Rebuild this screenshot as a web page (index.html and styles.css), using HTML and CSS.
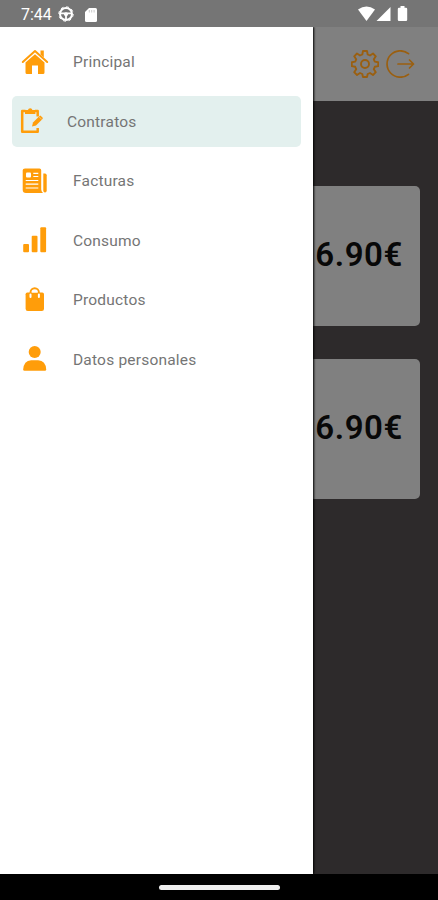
FILE: index.html
```html
<!DOCTYPE html>
<html lang="es">
<head>
  <meta charset="UTF-8" />
  <meta name="viewport" content="width=device-width, initial-scale=1.0" />
  <title>Contratos</title>
  <link rel="stylesheet" href="styles.css">
</head>
<body>
  <div class="status-bar">
    <span class="time">7:44</span>
    <svg class="status-wheel" width="16" height="16" viewBox="0 0 16 16">
      <circle cx="8" cy="8" r="6" fill="none" stroke="#fff" stroke-width="2"/>
      <circle cx="8" cy="8" r="7.2" fill="none" stroke="#fff" stroke-width="1" stroke-dasharray="2.8 2.85"/>
      <path d="M2 7.3h12M8 8v6" stroke="#fff" stroke-width="1.8"/>
      <circle cx="8" cy="8.3" r="2" fill="#fff"/>
    </svg>
    <svg class="status-card" width="12" height="14" viewBox="0 0 12 14">
      <path d="M4 0h6.5Q12 0 12 1.5v11Q12 14 10.5 14h-9Q0 14 0 12.500V4z" fill="#fff"/>
      <path d="M4.300 2v2.500M6.700 2v2.500M9.100 2v2.500" stroke="#bbb" stroke-width=".8"/>
    </svg>
    <svg class="status-signal" width="50" height="16" viewBox="0 0 50 16">
      <path d="M0 3.500Q8.500-2.500 17 3.500L8.500 15z" fill="#fff"/>
      <path d="M32.500 1v14H18.500z" fill="#fff"/>
      <path d="M42.500 0h4v1.700h1.500q1.200 0 1.200 1.200v10.900q0 1.200-1.200 1.200h-7q-1.200 0-1.200-1.200V2.900q0-1.200 1.200-1.200h1.500z" fill="#fff"/>
    </svg>
  </div>

  <div class="screen">
    <header>
      <svg width="28" height="28" viewBox="0 0 28 28" fill="none" stroke="#9a5f10" stroke-width="1.9" stroke-linejoin="round">
        <path d="M12 1h4l.7 3.500 2.300 1 3-2 2.800 2.800-2 3 1 2.300 3.400.7v3.800l-3.400.7-1 2.400 2 3-2.800 2.800-3-2-2.300 1L16 27h-4l-.7-3-2.300-1-3 2-2.800-2.800 2-3-1-2.400L.8 16.100v-3.800l3.400-.7 1-2.300-2-3L6 3.500l3 2 2.300-1z"/>
        <circle cx="14" cy="14" r="4"/>
      </svg>
      <svg width="29" height="28" viewBox="0 0 29 28" fill="none" stroke="#9a5f10" stroke-width="1.700" stroke-linecap="round" stroke-linejoin="round">
        <path d="M22.500 3.700A13.200 13.200 0 1 0 22.500 24.300"/>
        <path d="M12 14h15.500M23.500 10l4 4-4 4"/>
      </svg>
    </header>
    <main>
      <div class="card"><span class="price">6.90€</span></div>
      <div class="card"><span class="price">6.90€</span></div>
    </main>

    <nav class="drawer">
      <a class="menu-item">
        <svg width="28" height="28" viewBox="0 0 28 28" fill="#ff9d0a">
          <path d="M14 6.300L23.500 14.500v10q0 1.500-1.500 1.500h-5v-8.500h-6V26H6q-1.500 0-1.500-1.500v-10z"/>
          <path d="M1.800 14L14 3l12.200 11" fill="none" stroke="#ff9d0a" stroke-width="2" stroke-linecap="round" stroke-linejoin="round"/>
          <path d="M19.500 2.500h3.300v7l-3.300-3z"/>
        </svg>
        <span>Principal</span>
      </a>
      <a class="menu-item active">
        <svg width="28" height="28" viewBox="0 0 28 28" fill="none" stroke="#ff9d0a">
          <path d="M7.500 4H4.200v20.800h15.500V21M17 4h2.700v5.500" stroke-width="2.500" stroke-linejoin="round"/>
          <path d="M7 3h3q.3-1.800 2.200-1.800T14.400 3h3v4H7z" fill="#ff9d0a" stroke="none"/>
          <path d="M14 19.400l1-4 6.500-6.500q.7-.6 1.400 0l1.600 1.600q.6.700 0 1.400L18 18.400z" fill="#ff9d0a" stroke="none"/>
          <path d="M20.800 9.500l3.100 3.100" stroke="#e3f0ee" stroke-width=".5"/>
        </svg>
        <span>Contratos</span>
      </a>
      <a class="menu-item">
        <svg width="28" height="28" viewBox="0 0 28 28" fill="#ff9d0a">
          <path d="M4 1.500h14.500q1.700 0 1.700 1.700v19q0 2 1.800 3.800H5q-3.300 0-3.300-3.300V3.200Q1.700 1.500 4 1.500z"/>
          <path d="M22.300 6.500h1.700q1.700 0 1.700 1.700v15.300q0 2-1.700 2t-1.700-2z"/>
          <rect x="5" y="5.500" width="5" height="5" rx="1" fill="#fff"/>
          <path d="M12.300 6.300h5M12.300 9.500h5M4.700 13.500h12.600M4.700 17.200h12.600M4.700 21h12.600" stroke="#fff" stroke-width="1.200"/>
        </svg>
        <span>Facturas</span>
      </a>
      <a class="menu-item">
        <svg width="28" height="28" viewBox="0 0 28 28" fill="#ff9d0a">
          <rect x="2.200" y="18" width="5.800" height="8.300" rx="1"/>
          <rect x="10.700" y="9.800" width="5.800" height="16.500" rx="1"/>
          <rect x="19.300" y="1.300" width="5.800" height="25" rx="1"/>
        </svg>
        <span>Consumo</span>
      </a>
      <a class="menu-item">
        <svg width="28" height="28" viewBox="0 0 28 28">
          <path d="M9.500 9V6.500a4.200 4.200 0 0 1 8.400 0V9" fill="none" stroke="#ff9d0a" stroke-width="1.900"/>
          <path d="M6.300 6.500h15q1.700 0 1.700 1.700v14.600q0 2.200-2.200 2.200h-14q-2.200 0-2.200-2.200V8.200q0-1.700 1.700-1.700z" fill="#ff9d0a"/>
          <path d="M9.500 8.500v2.500M17.900 8.500v2.500" stroke="#fff" stroke-width="2" stroke-linecap="round"/>
          <path d="M10.800 6.500a3 3 0 0 1 5.800 0z" fill="#fff"/>
        </svg>
        <span>Productos</span>
      </a>
      <a class="menu-item">
        <svg width="28" height="28" viewBox="0 0 28 28" fill="#ff9d0a">
          <circle cx="13.700" cy="7" r="6"/>
          <path d="M2.200 24.500Q2.700 15.800 10.200 15.300h7Q24.700 15.800 25.200 24.500q0 1.300-1.300 1.300H3.500q-1.300 0-1.300-1.300z"/>
        </svg>
        <span>Datos personales</span>
      </a>
    </nav>
  </div>

  <div class="nav-bar"><div class="home-indicator"></div></div>
</body>
</html>
```
FILE: styles.css
```css
body {
  font-family: Roboto, sans-serif;
  margin: 0;
  height: 900px;
  display: flex;
  flex-direction: column;
  overflow: hidden;
  background: #000;
}
.status-bar {
  height: 27px;
  box-sizing: border-box;
  padding: 0 30px 0 21px;
  background: #757575;
  display: flex;
  align-items: center;
  color: #fff;
}
.time {
  width: 30px;
  font-size: 16px;
  line-height: 27px;
  padding-top: 2px;
}
.status-wheel {
  margin-left: 7px;
}
.status-card {
  margin-left: 11px;
  margin-top: 2px;
}
.status-signal {
  margin-left: auto;
}
.screen {
  position: relative;
  height: 847px;
  background: #2d2a2b;
}
header {
  height: 74px;
  box-sizing: border-box;
  padding-right: 23px;
  background: #808080;
  display: flex;
  align-items: center;
  justify-content: flex-end;
  gap: 7px;
}
main {
  padding: 85px 18px 0;
  display: flex;
  flex-direction: column;
  gap: 33px;
}
.card {
  height: 140px;
  box-sizing: border-box;
  padding: 0 17px 4px;
  border-radius: 5px;
  background: #808080;
  display: flex;
  align-items: center;
  justify-content: flex-end;
}
.price {
  font-size: 33px;
  font-weight: 600;
  letter-spacing: 0.6px;
  color: #080808;
}
.drawer {
  position: absolute;
  top: 0;
  left: 0;
  width: 313px;
  height: 847px;
  box-sizing: border-box;
  padding: 9px 12px;
  background: #fff;
  box-shadow: 1px 0 2px #000;
  clip-path: inset(0 -4px 0 0);
  display: flex;
  flex-direction: column;
  gap: 8.5px;
}
.menu-item {
  height: 51px;
  box-sizing: border-box;
  padding-left: 9px;
  border-radius: 5px;
  display: flex;
  align-items: center;
  gap: 24px;
  flex-shrink: 0;
  font-size: 15.5px;
  letter-spacing: 0.2px;
  color: #757575;
}
.menu-item span {
  padding-top: 1px;
}
.menu-item.active {
  width: 289px;
  padding-left: 6px;
  gap: 21px;
  background: #e3f0ee;
}
.nav-bar {
  height: 26px;
  background: #000;
  display: flex;
  align-items: center;
  justify-content: center;
}
.home-indicator {
  width: 121px;
  height: 5px;
  border-radius: 3px;
  background: #eee;
}
```
